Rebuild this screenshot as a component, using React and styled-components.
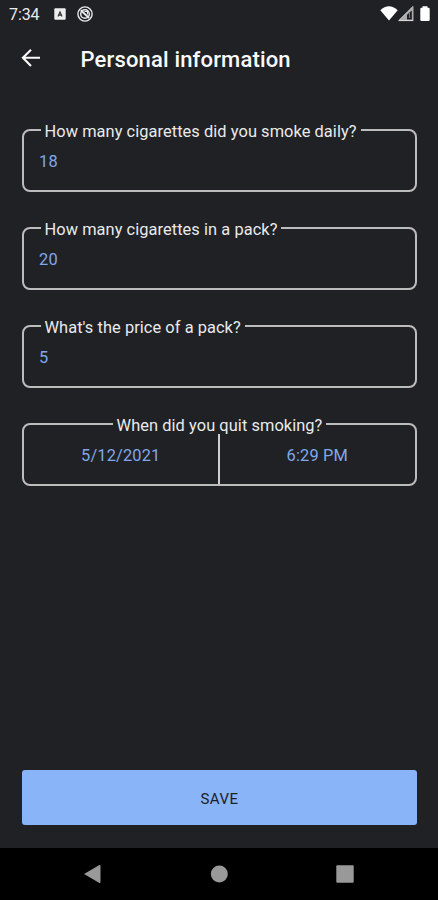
import React from "react";
import styled, { createGlobalStyle } from "styled-components";

const Global = createGlobalStyle`
  * { box-sizing: border-box; }
  body { margin: 0; background: #202124; }
  button { font: inherit; border: 0; padding: 0; background: none; color: inherit; }
  svg { display: block; }
`;

const Screen = styled.div`
  width: 438px;
  height: 900px;
  display: flex;
  flex-direction: column;
  overflow: hidden;
  background: #202124;
  color: #e9eaec;
  font-family: Roboto, "Liberation Sans", sans-serif;
`;

const StatusBar = styled.div`
  height: 28px;
  flex: none;
  display: flex;
  align-items: center;
  padding: 0 6px 0 9px;
`;

const Clock = styled.span`
  width: 45px;
  padding-top: 1px;
  font-size: 16px;
  line-height: 27px;
  letter-spacing: -0.1px;
`;

const StatusSpacer = styled.div`
  flex: 1;
`;

const Header = styled.header`
  height: 64px;
  flex: none;
  display: flex;
  align-items: center;
  padding-left: 19px;
`;

const BackButton = styled.button`
  width: 61.5px;
  height: 24px;
  margin-top: -4px;
`;

const Title = styled.h1`
  margin: 0;
  font-size: 22px;
  font-weight: 500;
  line-height: 28px;
  letter-spacing: 0.16px;
  color: #fafafa;
`;

const Form = styled.main`
  flex: 1;
  display: flex;
  flex-direction: column;
  padding: 28px 21px 23px 22px;
`;

const Field = styled.fieldset`
  height: 72px;
  min-width: 0;
  flex: none;
  margin: 0 0 26.1px;
  padding: 0 15px;
  border: 2px solid #bcbcbd;
  border-radius: 8px;
`;

const Legend = styled.legend`
  height: 20px;
  padding: 1px 4px 0;
  margin: ${(p) => (p.$centered ? "0 auto" : "0 0 0 1.5px")};
  font-size: 16.4px;
  line-height: 21px;
  white-space: nowrap;
  letter-spacing: 0.06px;
`;

const Value = styled.div`
  font-size: 16.4px;
  line-height: 20px;
  padding-top: 12px;
  letter-spacing: 0.2px;
  color: #80a8ea;
`;

const SplitField = styled(Field)`
  padding: 0;
`;

const Halves = styled.div`
  display: grid;
  grid-template-columns: 1fr 1fr;
  height: 50px;
`;

const Half = styled(Value)`
  text-align: center;
  letter-spacing: 0.15px;
  border-right: ${(p) => (p.$divided ? "2px solid #d0d0d1" : "0")};
`;

const SaveButton = styled.button`
  height: 55px;
  margin-top: auto;
  padding-top: 2px;
  border-radius: 3px;
  background: #8ab4f8;
  color: #202124;
  font-size: 15px;
  letter-spacing: 0.5px;
`;

const NavBar = styled.nav`
  height: 52px;
  flex: none;
  display: grid;
  grid-template-columns: repeat(3, 126px);
  justify-content: center;
  align-items: center;
  justify-items: center;
  background: #000;
`;

function AppBadgeIcon() {
  return (
    <svg width="12" height="12" viewBox="0 0 12 12">
      <rect x="0.3" y="0.3" width="11.4" height="11.4" rx="1" fill="#eee" />
      <path d="M4 8.6 6 4 8 8.6M4.7 7.2h2.6" fill="none" stroke="#333" strokeWidth="1.2" />
    </svg>
  );
}

const RingSvg = styled.svg`
  margin-left: 10.5px;
`;

function BlockedIcon() {
  return (
    <RingSvg width="16" height="16" viewBox="0 0 16 16" fill="none" stroke="#e9eaec">
      <circle cx="8" cy="8" r="7.1" strokeWidth="1.4" />
      <circle cx="8" cy="8" r="4.3" strokeWidth="1.5" />
      <path d="M3.8 4.2 12 12" strokeWidth="1.9" />
      <path d="M7.5 5.5h3v3" strokeWidth="1.1" />
    </RingSvg>
  );
}

function SignalIcons() {
  return (
    <svg width="52" height="18" viewBox="380 5 52 18">
      <path d="M380.3 10.2Q388.8 2.5 397.7 10.2L389 20.6Z" fill="#fff" />
      <path d="M413.5 6v15H398.3Z" fill="#aaa" />
      <path d="M411.8 10.5 407 14.7V19.4h4.8Z" fill="#202124" />
      <path d="M413 6.5 398.8 20.6H413" fill="none" stroke="#ddd" strokeWidth="1" />
      <path d="M409.5 13v5" stroke="#777" strokeWidth="1" />
      <path d="M422.5 6.2h5v1.5h1q1.2 0 1.2 1.2V20q0 1-1.2 1h-7q-1.2 0-1.2-1V8.9q0-1.2 1.2-1.2h1Z" fill="#fff" />
    </svg>
  );
}

function BackIcon() {
  return (
    <svg width="24" height="24" viewBox="0 0 24 24" fill="none" stroke="#fafafa" strokeWidth="2.1">
      <path d="M21 11.8H4.5M12 3.7 3.9 11.8l8.1 8.1" />
    </svg>
  );
}

function NavIcon({ shape }) {
  return (
    <svg width="20" height="20" viewBox="0 0 20 20" fill="#999">
      {shape === "back" && <path d="M1 10 16 1.3Q17.5.6 17.5 2v16q0 1.4-1.5.7Z" />}
      {shape === "home" && <circle cx="10.3" cy="10" r="8.5" />}
      {shape === "recent" && <rect x="1.3" y="1.3" width="17.4" height="17.4" rx="1" />}
    </svg>
  );
}

const questions = [
  { label: "How many cigarettes did you smoke daily?", value: "18" },
  { label: "How many cigarettes in a pack?", value: "20" },
  { label: "What's the price of a pack?", value: "5" },
];

export default function App() {
  return (
    <Screen>
      <Global />
      <StatusBar>
        <Clock>7:34</Clock>
        <AppBadgeIcon />
        <BlockedIcon />
        <StatusSpacer />
        <SignalIcons />
      </StatusBar>
      <Header>
        <BackButton aria-label="Back"><BackIcon /></BackButton>
        <Title>Personal information</Title>
      </Header>
      <Form>
        {questions.map((q) => (
          <Field key={q.label}>
            <Legend>{q.label}</Legend>
            <Value>{q.value}</Value>
          </Field>
        ))}
        <SplitField>
          <Legend $centered>When did you quit smoking?</Legend>
          <Halves>
            <Half $divided>5/12/2021</Half>
            <Half>6:29 PM</Half>
          </Halves>
        </SplitField>
        <SaveButton>SAVE</SaveButton>
      </Form>
      <NavBar>
        <NavIcon shape="back" />
        <NavIcon shape="home" />
        <NavIcon shape="recent" />
      </NavBar>
    </Screen>
  );
}
